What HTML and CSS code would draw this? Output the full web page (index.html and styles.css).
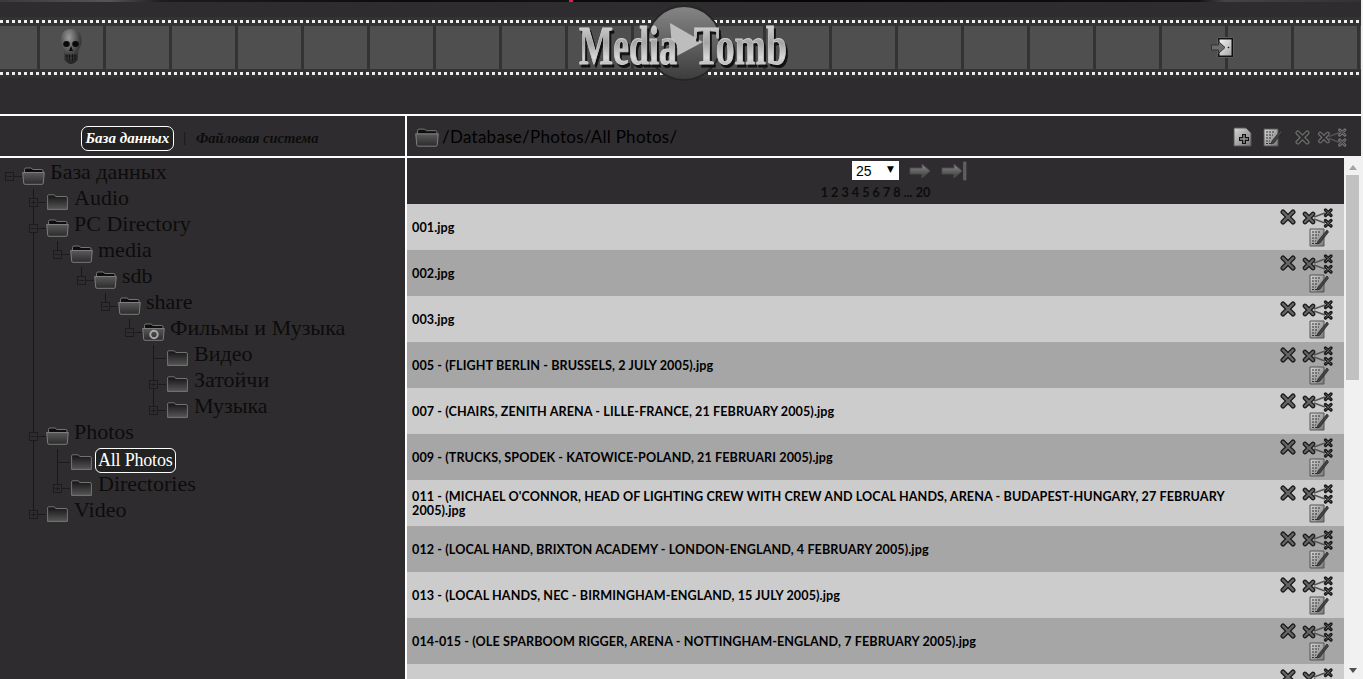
FILE: index.html
```html
<!DOCTYPE html>
<html lang="en">

<head>
    <meta charset="UTF-8">
    <meta name="viewport" content="width=device-width, initial-scale=1.0">
    <title>MediaTomb</title>
    <link rel="stylesheet" href="styles.css">
</head>

<body>
    <!-- shared icons -->
    <svg class="sprite" aria-hidden="true">
        <defs>
            <linearGradient id="fold-a" x1="0" y1="0" x2="0" y2="1">
                <stop offset="0" stop-color="#5a5a5a" />
                <stop offset="1" stop-color="#2b2b2b" />
            </linearGradient>
            <linearGradient id="fold-b" x1="0" y1="0" x2="0" y2="1">
                <stop offset="0" stop-color="#141414" />
                <stop offset="1" stop-color="#565656" />
            </linearGradient>
            <linearGradient id="paper" x1="0" y1="0" x2="1" y2="1">
                <stop offset="0" stop-color="#d8d8d8" />
                <stop offset="1" stop-color="#777" />
            </linearGradient>
            <radialGradient id="bone" cx="0.4" cy="0.25" r="0.8">
                <stop offset="0" stop-color="#9a9a9a" />
                <stop offset="0.6" stop-color="#444" />
                <stop offset="1" stop-color="#1c1c1c" />
            </radialGradient>
            <linearGradient id="disc" x1="0" y1="0" x2="0" y2="1">
                <stop offset="0" stop-color="#868686" />
                <stop offset="1" stop-color="#3c3c3c" />
            </linearGradient>
            <linearGradient id="chrome" x1="0" y1="0" x2="0" y2="1">
                <stop offset="0" stop-color="#e8e8e8" />
                <stop offset="0.45" stop-color="#a4a4a4" />
                <stop offset="0.7" stop-color="#d8d8d8" />
                <stop offset="1" stop-color="#8c8c8c" />
            </linearGradient>
            <linearGradient id="arrow" x1="0" y1="0" x2="0" y2="1">
                <stop offset="0" stop-color="#8c8c8c" />
                <stop offset="1" stop-color="#3a3a3a" />
            </linearGradient>
            <linearGradient id="door" x1="0" y1="0" x2="1" y2="1">
                <stop offset="0" stop-color="#f2f2f2" />
                <stop offset="1" stop-color="#a8a8a8" />
            </linearGradient>
        </defs>
        <symbol id="folder-open" viewBox="0 0 23 18">
            <path d="M2.5 5V2.5Q2.5 1 4 1H9L11 2.5H19.500Q21 2.500 21 4V6H2.500Z" fill="#0e0e0e" stroke="#8a8a8a" stroke-width=".8" />
            <path d="M.7 5.500H22.300L21.300 16Q21.200 17.300 20 17.300H3Q1.800 17.300 1.700 16Z" fill="url(#fold-a)" stroke="#858585" stroke-width=".9" />
        </symbol>
        <symbol id="folder-closed" viewBox="0 0 21 16">
            <path d="M.6 15.400V2Q.6 .8 1.800 .8H7L9 2.500H19Q20.400 2.500 20.400 4V15.400Z" fill="url(#fold-b)" stroke="#7c7c7c" stroke-width=".9" />
        </symbol>
        <symbol id="cross" viewBox="0 0 16 16">
            <path class="x-out" d="M3 3L13 13M13 3L3 13" stroke-width="5" />
            <path class="x-in" d="M3 3L13 13M13 3L3 13" stroke-width="2.400" />
        </symbol>
        <symbol id="unlink" viewBox="0 0 31 20">
            <path d="M12 9L23 5M12 11L23 15" fill="none" stroke="#555" stroke-width="1.500" />
            <path class="x-out" d="M3 6L11 14M11 6L3 14" stroke-width="4.600" />
            <path class="x-in" d="M3 6L11 14M11 6L3 14" stroke-width="2" />
            <path class="x-out" d="M23.500 2L29 7.500M29 2L23.500 7.500M23.500 12.500L29 18M29 12.500L23.500 18" stroke-width="3.200" />
            <path class="x-in" d="M24 2.500L28.500 7M28.500 2.500L24 7M24 13L28.500 17.500M28.500 13L24 17.500" stroke-width="1" />
        </symbol>
        <symbol id="edit" viewBox="0 0 20 19">
            <path d="M1 1H15V18H1Z" fill="url(#paper)" stroke="#555" />
            <path d="M3 4H12M3 7H10M3 10H8M3 13H7M3 15.500H8" fill="none" stroke="#333" stroke-width="1" stroke-dasharray="2 1" />
            <path d="M18 2L9 13L8 16L11 15L19.500 4Z" fill="#444" stroke="#222" stroke-width=".7" />
        </symbol>
        <symbol id="add" viewBox="0 0 19 20">
            <path d="M1 1H13L18 6V19H1Z" fill="url(#paper)" stroke="#555" />
            <path d="M11 7V17M6 12H16" fill="none" stroke="#111" stroke-width="4" />
            <path d="M11 8V16M7 12H15" fill="none" stroke="#999" stroke-width="1.400" />
        </symbol>
        <symbol id="go" viewBox="0 0 22 16">
            <path d="M1 5H13V1L21 8L13 15V11H1Z" fill="url(#arrow)" stroke="#4c4c4c" />
        </symbol>
        <symbol id="go-end" viewBox="0 0 26 20">
            <path d="M1 7H13V3L21 10L13 17V13H1Z" fill="url(#arrow)" stroke="#4c4c4c" />
            <path d="M22.500 1H25V19H22.500Z" fill="#5c5c5c" stroke="#6c6c6c" stroke-width=".6" />
        </symbol>
    </svg>

    <div class="app">
        <div class="top-strip"></div>
        <header class="header">
            <div class="film">
                <svg class="skull" viewBox="0 0 22 35">
                    <path d="M11 0C4 0 0 5 .5 12C.8 16 2 19 3.500 21L4.500 31Q8 35 11 35T17.500 31L18.500 21C20 19 21.500 16 21.500 12C22 5 18 0 11 0Z" fill="url(#bone)" />
                    <ellipse cx="6.500" cy="15" rx="3.300" ry="3" fill="#0a0a0a" />
                    <ellipse cx="15.500" cy="15" rx="3.300" ry="3" fill="#0a0a0a" />
                    <path d="M11 17L9 22H13Z" fill="#0a0a0a" />
                    <path d="M5 27H17M7 25V31M9.500 25V32M12.500 25V32M15 25V31" stroke="#111" stroke-width=".8" fill="none" />
                </svg>
                <svg class="logo" viewBox="0 0 212 78">
                    <circle cx="107" cy="39" r="37" fill="url(#disc)" stroke="#262626" stroke-width="2" />
                    <path d="M93 19L126 38L96 54Z" fill="#bdbdbd" />
                    <g class="logo-text">
                        <text transform="scale(1 1.5)" x="2" y="40" textLength="98" lengthAdjust="spacingAndGlyphs">Media</text>
                        <text transform="scale(1 1.5)" x="117" y="40" textLength="93" lengthAdjust="spacingAndGlyphs">Tomb</text>
                    </g>
                </svg>
                <svg class="logout" viewBox="0 0 23 21">
                    <path d="M6.500 .5H22.500V20.500H6.500Z" fill="#111" stroke="#5c5c5c" />
                    <path d="M8.500 2.500H20.500V18.500H8.500Z" fill="url(#door)" />
                    <circle cx="17.500" cy="10.500" r=".8" fill="#111" />
                    <path d="M.5 8H7.500V4.500L14 10.500L7.500 16.500V13H.5Z" fill="#6c6c6c" stroke="#333" />
                </svg>
            </div>
        </header>

        <div class="panes">
            <aside class="side">
                <nav class="tabs">
                    <a class="tab tab-active">База данных</a>
                    <span class="tab-sep">|</span>
                    <a class="tab">Файловая система</a>
                </nav>
                <ul class="tree root">
                    <li>
                        <div class="node"><i class="exp"></i><i class="wire"></i><svg class="ico-open"><use href="#folder-open" /></svg><span class="name">База данных</span></div>
                        <ul class="tree">
                            <li>
                                <div class="node"><i class="exp plus"></i><i class="wire"></i><svg class="ico-closed"><use href="#folder-closed" /></svg><span class="name">Audio</span></div>
                            </li>
                            <li>
                                <div class="node"><i class="exp"></i><i class="wire"></i><svg class="ico-open"><use href="#folder-open" /></svg><span class="name">PC Directory</span></div>
                                <ul class="tree">
                                    <li>
                                        <div class="node"><i class="exp"></i><i class="wire"></i><svg class="ico-open"><use href="#folder-open" /></svg><span class="name">media</span></div>
                                        <ul class="tree">
                                            <li>
                                                <div class="node"><i class="exp"></i><i class="wire"></i><svg class="ico-open"><use href="#folder-open" /></svg><span class="name">sdb</span></div>
                                                <ul class="tree">
                                                    <li>
                                                        <div class="node"><i class="exp"></i><i class="wire"></i><svg class="ico-open"><use href="#folder-open" /></svg><span class="name">share</span></div>
                                                        <ul class="tree">
                                                            <li>
                                                                <div class="node"><i class="exp"></i><i class="wire"></i>
                                                                    <svg class="ico-open" viewBox="0 0 23 18"><use href="#folder-open" width="23" height="18" /><circle cx="12" cy="11.500" r="3.700" fill="none" stroke="#aaa" stroke-width="2" /></svg>
                                                                    <span class="name">Фильмы и Музыка</span>
                                                                </div>
                                                                <ul class="tree">
                                                                    <li>
                                                                        <div class="node"><i class="exp leaf"></i><i class="wire"></i><svg class="ico-closed"><use href="#folder-closed" /></svg><span class="name">Видео</span></div>
                                                                    </li>
                                                                    <li>
                                                                        <div class="node"><i class="exp plus"></i><i class="wire"></i><svg class="ico-closed"><use href="#folder-closed" /></svg><span class="name">Затойчи</span></div>
                                                                    </li>
                                                                    <li>
                                                                        <div class="node"><i class="exp plus"></i><i class="wire"></i><svg class="ico-closed"><use href="#folder-closed" /></svg><span class="name">Музыка</span></div>
                                                                    </li>
                                                                </ul>
                                                            </li>
                                                        </ul>
                                                    </li>
                                                </ul>
                                            </li>
                                        </ul>
                                    </li>
                                </ul>
                            </li>
                            <li>
                                <div class="node"><i class="exp"></i><i class="wire"></i><svg class="ico-open"><use href="#folder-open" /></svg><span class="name">Photos</span></div>
                                <ul class="tree">
                                    <li>
                                        <div class="node"><i class="exp leaf"></i><i class="wire"></i><svg class="ico-closed"><use href="#folder-closed" /></svg><span class="name name-active">All Photos</span></div>
                                    </li>
                                    <li>
                                        <div class="node"><i class="exp plus"></i><i class="wire"></i><svg class="ico-closed"><use href="#folder-closed" /></svg><span class="name">Directories</span></div>
                                    </li>
                                </ul>
                            </li>
                            <li>
                                <div class="node"><i class="exp plus"></i><i class="wire"></i><svg class="ico-closed"><use href="#folder-closed" /></svg><span class="name">Video</span></div>
                            </li>
                        </ul>
                    </li>
                </ul>
            </aside>

            <main class="main">
                <div class="path-bar">
                    <svg class="ico-path"><use href="#folder-open" /></svg>
                    <span class="path">/Database/Photos/All Photos/</span>
                    <div class="path-tools">
                        <svg class="tool-add"><use href="#add" /></svg>
                        <svg class="tool-edit"><use href="#edit" /></svg>
                        <svg class="tool-cross"><use href="#cross" /></svg>
                        <svg class="tool-unlink"><use href="#unlink" /></svg>
                    </div>
                </div>
                <div class="list-wrap">
                    <div class="scroller">
                        <div class="pager">
                            <div class="pager-top">
                                <span></span>
                                <span class="select-wrap">
                                    <select class="per-page">
                                        <option>25</option>
                                        <option>50</option>
                                        <option>100</option>
                                    </select>
                                </span>
                                <span class="pager-arrows">
                                    <svg class="pager-go"><use href="#go" /></svg>
                                    <svg class="pager-end"><use href="#go-end" /></svg>
                                </span>
                            </div>
                            <div class="pages">1 2 3 4 5 6 7 8 ... 20</div>
                        </div>

                        <div class="row">
                            <div class="title">001.jpg</div>
                            <div class="acts"><svg class="a-cross"><use href="#cross" /></svg><svg class="a-unlink"><use href="#unlink" /></svg><svg class="a-edit"><use href="#edit" /></svg></div>
                        </div>
                        <div class="row">
                            <div class="title">002.jpg</div>
                            <div class="acts"><svg class="a-cross"><use href="#cross" /></svg><svg class="a-unlink"><use href="#unlink" /></svg><svg class="a-edit"><use href="#edit" /></svg></div>
                        </div>
                        <div class="row">
                            <div class="title">003.jpg</div>
                            <div class="acts"><svg class="a-cross"><use href="#cross" /></svg><svg class="a-unlink"><use href="#unlink" /></svg><svg class="a-edit"><use href="#edit" /></svg></div>
                        </div>
                        <div class="row">
                            <div class="title">005 - (FLIGHT BERLIN - BRUSSELS, 2 JULY 2005).jpg</div>
                            <div class="acts"><svg class="a-cross"><use href="#cross" /></svg><svg class="a-unlink"><use href="#unlink" /></svg><svg class="a-edit"><use href="#edit" /></svg></div>
                        </div>
                        <div class="row">
                            <div class="title">007 - (CHAIRS, ZENITH ARENA - LILLE-FRANCE, 21 FEBRUARY 2005).jpg</div>
                            <div class="acts"><svg class="a-cross"><use href="#cross" /></svg><svg class="a-unlink"><use href="#unlink" /></svg><svg class="a-edit"><use href="#edit" /></svg></div>
                        </div>
                        <div class="row">
                            <div class="title">009 - (TRUCKS, SPODEK - KATOWICE-POLAND, 21 FEBRUARI 2005).jpg</div>
                            <div class="acts"><svg class="a-cross"><use href="#cross" /></svg><svg class="a-unlink"><use href="#unlink" /></svg><svg class="a-edit"><use href="#edit" /></svg></div>
                        </div>
                        <div class="row">
                            <div class="title">011 - (MICHAEL O'CONNOR, HEAD OF LIGHTING CREW WITH CREW AND LOCAL HANDS, ARENA - BUDAPEST-HUNGARY, 27 FEBRUARY 2005).jpg</div>
                            <div class="acts"><svg class="a-cross"><use href="#cross" /></svg><svg class="a-unlink"><use href="#unlink" /></svg><svg class="a-edit"><use href="#edit" /></svg></div>
                        </div>
                        <div class="row">
                            <div class="title">012 - (LOCAL HAND, BRIXTON ACADEMY - LONDON-ENGLAND, 4 FEBRUARY 2005).jpg</div>
                            <div class="acts"><svg class="a-cross"><use href="#cross" /></svg><svg class="a-unlink"><use href="#unlink" /></svg><svg class="a-edit"><use href="#edit" /></svg></div>
                        </div>
                        <div class="row">
                            <div class="title">013 - (LOCAL HANDS, NEC - BIRMINGHAM-ENGLAND, 15 JULY 2005).jpg</div>
                            <div class="acts"><svg class="a-cross"><use href="#cross" /></svg><svg class="a-unlink"><use href="#unlink" /></svg><svg class="a-edit"><use href="#edit" /></svg></div>
                        </div>
                        <div class="row">
                            <div class="title">014-015 - (OLE SPARBOOM RIGGER, ARENA - NOTTINGHAM-ENGLAND, 7 FEBRUARY 2005).jpg</div>
                            <div class="acts"><svg class="a-cross"><use href="#cross" /></svg><svg class="a-unlink"><use href="#unlink" /></svg><svg class="a-edit"><use href="#edit" /></svg></div>
                        </div>
                        <div class="row">
                            <div class="title"></div>
                            <div class="acts"><svg class="a-cross"><use href="#cross" /></svg><svg class="a-unlink"><use href="#unlink" /></svg><svg class="a-edit"><use href="#edit" /></svg></div>
                        </div>
                    </div>
                    <div class="sbar">
                        <div class="sbar-up"></div>
                        <div class="sbar-thumb"></div>
                        <div class="sbar-down"></div>
                    </div>
                </div>
            </main>
        </div>
    </div>
</body>

</html>
```

FILE: styles.css
```css
* {
    box-sizing: border-box;
}

html,
body {
    margin: 0;
    height: 100%;
    overflow: hidden;
}

body {
    background-color: #f1f1f1;
    font-family: "Liberation Serif", serif;
    color: #111;
}

.sprite {
    position: absolute;
    width: 0;
    height: 0;
}

.x-out,
.x-in {
    fill: none;
    stroke-linecap: round;
}

.x-out {
    stroke: var(--x-out, #1c1c1c);
}

.x-in {
    stroke: var(--x-in, #666);
}

.app {
    display: flex;
    flex-direction: column;
    width: 1361px;
    height: 100vh;
    background-color: #2e2c2e;
}

.top-strip {
    height: 2px;
    background: linear-gradient(90deg, #3a3a3a 0, #555 8%, #1c1c1c 12%, #0c0c0c 30%, #111 41.8%, #e0204a 41.8%, #e0204a 42.1%, #0c0c0c 42.1%, #050505 60%, #111 88%, #444 90%, #333 100%);
}

.header {
    height: 114px;
    padding-top: 15px;
    border-bottom: 2px solid #fff;
}

/* film strip: sprocket dots above and below, frames between */
.film {
    position: relative;
    display: flex;
    align-items: center;
    height: 61px;
    background-color: #333;
    background-image:
        linear-gradient(90deg, #eee 3px, transparent 3px),
        linear-gradient(90deg, #eee 3px, transparent 3px),
        linear-gradient(90deg, #4f4f4f 63px, transparent 63px);
    background-size: 6px 3px, 6px 3px, 66px 43px;
    background-position: 0 3px, 0 55px, 40px 9px;
    background-repeat: repeat-x;
}

.skull {
    width: 22px;
    height: 35px;
    margin-left: 60px;
    margin-top: -2px;
}

.logo {
    position: absolute;
    left: 577px;
    top: -13px;
    width: 212px;
    height: 78px;
}

.logo-text {
    font-family: "Liberation Serif", serif;
    font-weight: 700;
    font-size: 36px;
    fill: url(#chrome);
    stroke: #cfcfcf;
    stroke-width: 0.6px;
    filter: drop-shadow(2px 3px 0 #111);
}

.logout {
    width: 23px;
    height: 21px;
    margin-left: auto;
    margin-right: 127px;
}

.panes {
    display: flex;
    flex: 1;
    min-height: 0;
}

.side {
    width: 407px;
    flex-shrink: 0;
    border-right: 2px solid #fff;
    overflow: hidden;
}

.tabs {
    display: flex;
    align-items: center;
    justify-content: center;
    gap: 9px;
    height: 42px;
    padding: 4px 6px 0 0;
    border-bottom: 2px solid #fff;
    font-size: 14.5px;
    font-style: italic;
    font-weight: 700;
}

.tab {
    color: #0c0c0c;
}

.tab-active {
    padding: 3px 4px;
    font-size: 15px;
    color: #fff;
    background-color: #222;
    border: 1px solid #fff;
    border-radius: 7px;
}

.tab-sep {
    margin-right: 1px;
    font-style: normal;
    font-weight: 400;
    font-size: 14px;
}

/* tree */
.tree {
    list-style: none;
    margin: 0;
    padding: 0 0 0 24px;
}

.tree.root {
    padding: 5px 0 0 5px;
}

.tree li {
    position: relative;
}

.tree .tree li::before {
    content: "";
    position: absolute;
    left: 4px;
    top: 0;
    bottom: 0;
    width: 1px;
    background-color: #181818;
}

.tree .tree li:last-child::before {
    bottom: auto;
    height: 13px;
}

.node {
    position: relative;
    display: flex;
    align-items: center;
    height: 26px;
}

.exp {
    position: relative;
    width: 9px;
    height: 9px;
    flex-shrink: 0;
    border: 1px solid #1c1c1c;
    background: linear-gradient(#1c1c1c, #1c1c1c) center / 5px 1px no-repeat #2e2c2e;
}

.exp.plus {
    background:
        linear-gradient(#1c1c1c, #1c1c1c) center / 5px 1px no-repeat,
        linear-gradient(#1c1c1c, #1c1c1c) center / 1px 5px no-repeat,
        #2e2c2e;
}

.exp.leaf {
    border: 0;
    height: 1px;
    background: linear-gradient(90deg, transparent 4px, #1c1c1c 4px);
}

.wire {
    width: 8px;
    height: 1px;
    flex-shrink: 0;
    background-color: #1c1c1c;
}

.ico-open {
    width: 23px;
    height: 18px;
    flex-shrink: 0;
}

.ico-closed {
    width: 21px;
    height: 16px;
    flex-shrink: 0;
    margin: 0 1px;
}

.name {
    margin: -8px 0 0 5px;
    font-size: 22px;
    white-space: nowrap;
    color: #0c0c0c;
}

.name-active {
    margin: -4px 0 0 2px;
    padding: 0 2px;
    font-size: 18px;
    line-height: 23px;
    letter-spacing: -0.2px;
    color: #fff;
    background-color: #222;
    border: 1px solid #fff;
    border-radius: 6px;
}

/* right side */
.main {
    flex: 1;
    min-width: 0;
    display: flex;
    flex-direction: column;
}

.path-bar {
    display: flex;
    align-items: center;
    height: 40px;
    padding-left: 8px;
    padding-right: 14px;
    flex-shrink: 0;
}

.ico-path {
    width: 24px;
    height: 19px;
    margin-top: 2px;
}

.path {
    margin-left: 3px;
    font-family: Lato, sans-serif;
    font-size: 17px;
    letter-spacing: 0.27px;
    color: #000;
}

.path-tools {
    display: flex;
    align-items: center;
    margin-left: auto;
    margin-top: 2px;
}

.tool-add {
    width: 19px;
    height: 20px;
}

.tool-edit {
    width: 20px;
    height: 19px;
    margin-left: 11px;
}

.tool-cross,
.tool-unlink {
    --x-out: #6e6e6e;
    --x-in: #2c2c2c;
}

.tool-cross {
    width: 15px;
    height: 15px;
    margin-left: 12px;
}

.tool-unlink {
    width: 30px;
    height: 19px;
    margin-left: 7px;
}

.list-wrap {
    display: flex;
    flex: 1;
    min-height: 0;
}

.scroller {
    flex: 1;
    min-width: 0;
    overflow: hidden;
}

/* scrollbar drawn by hand, the browser hides its own in the photo */
.sbar {
    display: flex;
    flex-direction: column;
    width: 17px;
    flex-shrink: 0;
    background-color: #f1f1f1;
}

.sbar-up,
.sbar-down {
    display: flex;
    align-items: center;
    justify-content: center;
}

.sbar-up {
    height: 19px;
    padding-top: 3px;
}

.sbar-up::before {
    content: "";
    border-left: 4px solid transparent;
    border-right: 4px solid transparent;
    border-bottom: 5px solid #a3a3a3;
}

.sbar-thumb {
    height: 205px;
    margin: 0 2px;
    background-color: #c1c1c1;
}

.sbar-down {
    height: 17px;
    margin-top: auto;
}

.sbar-down::before {
    content: "";
    border-left: 4px solid transparent;
    border-right: 4px solid transparent;
    border-top: 5px solid #505050;
}

.pager {
    height: 48px;
    border-top: 2px solid #fff;
}

.pager-top {
    display: grid;
    grid-template-columns: 1fr 47px 1fr;
    align-items: start;
    column-gap: 10px;
    height: 24px;
    padding-top: 3px;
}

.select-wrap {
    position: relative;
    display: block;
    width: 47px;
    height: 19px;
}

.select-wrap::after {
    content: "▼";
    position: absolute;
    right: 5px;
    top: 3px;
    font-family: "DejaVu Sans", sans-serif;
    font-size: 9px;
    color: #000;
    pointer-events: none;
}

.per-page {
    appearance: none;
    width: 47px;
    height: 19px;
    padding: 0 0 0 4px;
    border: 0;
    border-radius: 0;
    background-color: #fff;
    font-family: "Liberation Sans", sans-serif;
    font-size: 14px;
    color: #000;
}

.pager-arrows {
    display: flex;
    align-items: center;
    gap: 10px;
    height: 20px;
}

.pager-go {
    width: 22px;
    height: 16px;
}

.pager-end {
    width: 26px;
    height: 20px;
}

.pages {
    margin-top: 2px;
    text-align: center;
    font-family: Lato, sans-serif;
    font-size: 12.6px;
    font-weight: 700;
    line-height: 18px;
    color: #0c0c0c;
}

.row {
    display: flex;
    align-items: center;
    justify-content: space-between;
    height: 46px;
    padding: 0 11px 0 5px;
    background-color: #ccc;
}

.row:nth-of-type(odd) {
    background-color: #a6a6a6;
}

.title {
    width: 830px;
    padding-top: 1px;
    font-family: Lato, sans-serif;
    font-size: 12.6px;
    font-weight: 700;
    line-height: 14px;
    letter-spacing: 0.09px;
    color: #000;
}

.acts {
    display: flex;
    flex-wrap: wrap;
    justify-content: flex-end;
    align-items: flex-start;
    align-self: flex-start;
    width: 54px;
    padding-top: 4px;
}

.a-cross {
    width: 16px;
    height: 16px;
    margin-top: 1px;
}

.a-unlink {
    width: 31px;
    height: 20px;
    margin-left: 6px;
}

.a-edit {
    width: 20px;
    height: 19px;
    margin-right: 4px;
}
```
